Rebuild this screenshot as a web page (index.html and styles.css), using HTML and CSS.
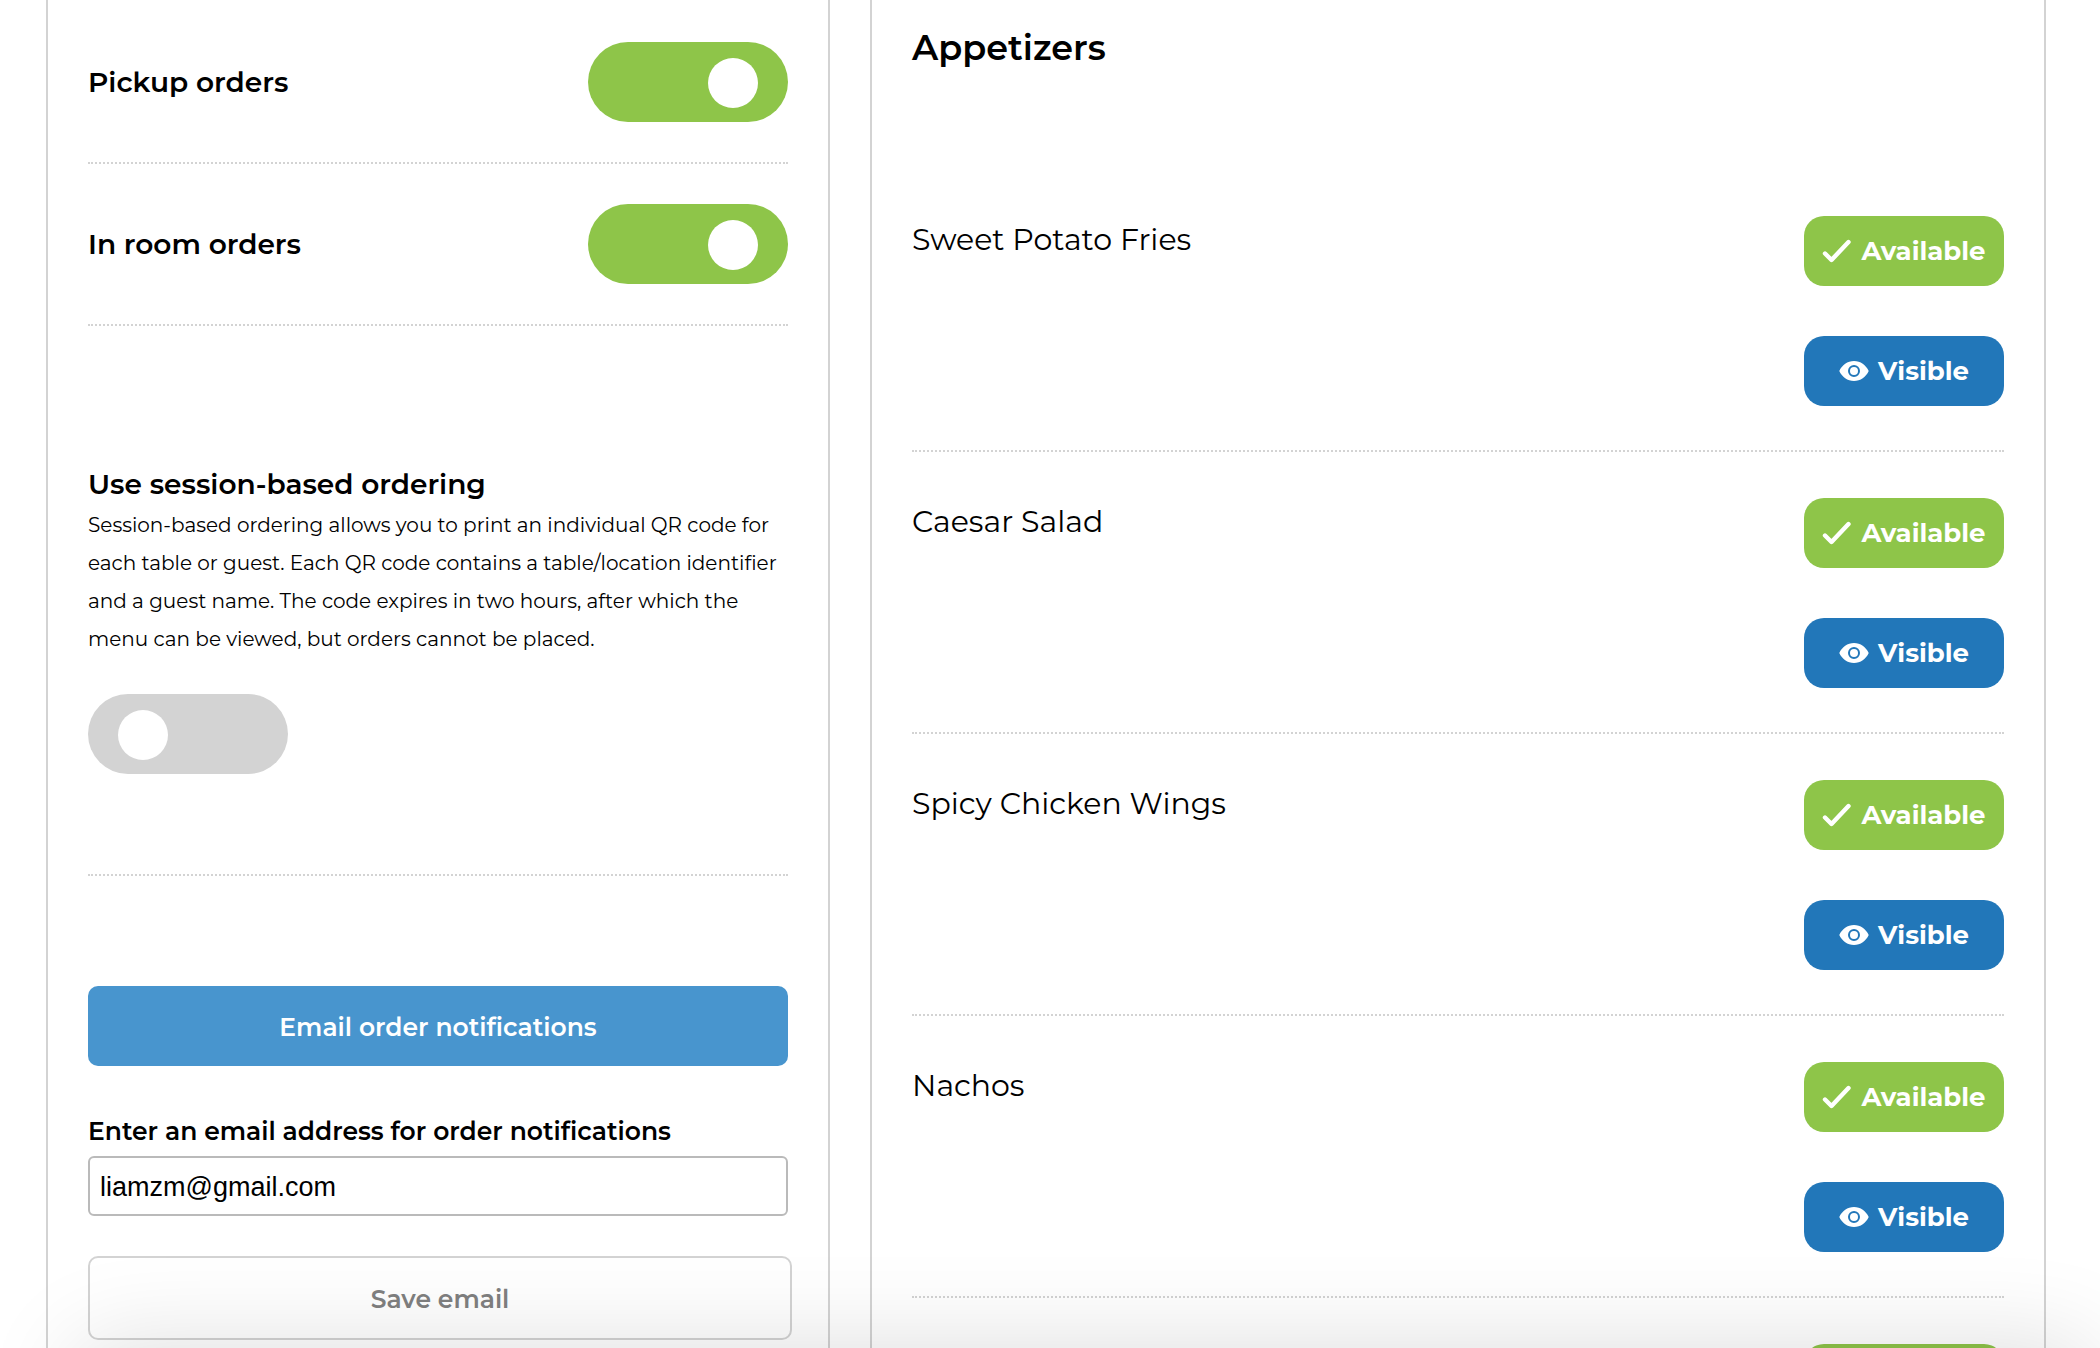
FILE: index.html
```html
<!DOCTYPE html>
<html lang="en">
<head>
<meta charset="utf-8">
<meta name="viewport" content="width=device-width, initial-scale=1">
<title>Menu settings</title>
<link rel="stylesheet" href="styles.css">
</head>
<body>
<svg class="sprite" aria-hidden="true">
  <symbol id="check" viewBox="0 0 30 26"><path d="M3 15.500 L9.500 22 L26.500 4" fill="none" stroke="currentColor" stroke-width="4.400" stroke-linecap="round" stroke-linejoin="round"/></symbol>
  <symbol id="eye" viewBox="0 0 30 26"><path fill="currentColor" fill-rule="evenodd" d="M15 3C8.500 3 3 7 0.300 13c2.700 6 8.200 10 14.700 10s12-4 14.700-10C27 7 21.500 3 15 3zM15 19a6 6 0 1 1 0-12a6 6 0 0 1 0 12z"/><circle cx="15" cy="13" r="4" fill="currentColor"/></symbol>
</svg>
<main class="page">
  <section class="card settings">
    <div class="setting">
      <label class="setting-name" for="pickup">Pickup orders</label>
      <input class="toggle" id="pickup" type="checkbox" checked>
    </div>
    <div class="setting">
      <label class="setting-name" for="room">In room orders</label>
      <input class="toggle" id="room" type="checkbox" checked>
    </div>
    <div class="session">
      <label class="setting-name" for="session">Use session-based ordering</label>
      <p class="note">Session-based ordering allows you to print an individual QR code for each table or guest. Each QR code contains a table/location identifier and a guest name. The code expires in two hours, after which the menu can be viewed, but orders cannot be placed.</p>
      <input class="toggle" id="session" type="checkbox">
    </div>
    <form class="email">
      <button class="notify" type="button">Email order notifications</button>
      <label class="email-label" for="email">Enter an email address for order notifications</label>
      <input class="email-input" id="email" type="email" value="liamzm@gmail.com">
      <button class="save" type="button">Save email</button>
    </form>
  </section>
  <section class="card menu">
    <h2 class="menu-title">Appetizers</h2>
    <ul class="items">
      <li class="item"><span class="item-name">Sweet Potato Fries</span>
        <div class="actions"><button class="pill available" type="button"><svg class="icon"><use href="#check"/></svg>Available</button><button class="pill visible" type="button"><svg class="icon"><use href="#eye"/></svg>Visible</button></div></li>
      <li class="item"><span class="item-name">Caesar Salad</span>
        <div class="actions"><button class="pill available" type="button"><svg class="icon"><use href="#check"/></svg>Available</button><button class="pill visible" type="button"><svg class="icon"><use href="#eye"/></svg>Visible</button></div></li>
      <li class="item"><span class="item-name">Spicy Chicken Wings</span>
        <div class="actions"><button class="pill available" type="button"><svg class="icon"><use href="#check"/></svg>Available</button><button class="pill visible" type="button"><svg class="icon"><use href="#eye"/></svg>Visible</button></div></li>
      <li class="item"><span class="item-name">Nachos</span>
        <div class="actions"><button class="pill available" type="button"><svg class="icon"><use href="#check"/></svg>Available</button><button class="pill visible" type="button"><svg class="icon"><use href="#eye"/></svg>Visible</button></div></li>
      <li class="item"><span class="item-name"></span>
        <div class="actions"><button class="pill available" type="button" aria-label="Available"></button></div></li>
    </ul>
  </section>
</main>
<div class="bottom-shade"></div>
</body>
</html>
```
FILE: styles.css
```css
* { box-sizing: border-box; }
body {
  margin: 0;
  height: 100vh;
  overflow: hidden;
  background: #fff;
  color: #000;
  font-family: Montserrat, Inter, "Open Sans", sans-serif;
  font-variant-ligatures: no-common-ligatures;
}
.sprite { display: none; }
.page {
  display: grid;
  grid-template-columns: minmax(0, 2fr) minmax(0, 3fr);
  gap: 40px;
  height: 100vh;
  padding: 0 54px 0 46px;
  overflow: hidden;
}
.card {
  padding: 0 40px;
  border: solid #d3d3d3;
  border-width: 0 2px;
}
.setting {
  display: flex;
  align-items: center;
  justify-content: space-between;
  padding: 40px 0;
  border-bottom: 2px dotted #d3d3d3;
}
.setting:first-child { padding-top: 42px; }
.setting-name {
  font-size: 28px;
  font-weight: 600;
  line-height: 38px;
}
.toggle {
  appearance: none;
  display: block;
  width: 200px;
  height: 80px;
  margin: 0;
  padding: 16px 30px;
  border-radius: 40px;
  background: #d3d3d3;
}
.toggle::before {
  content: "";
  display: block;
  width: 50px;
  height: 50px;
  border-radius: 50%;
  background: #fff;
}
.toggle:checked { background: #8ec549; }
.toggle:checked::before { margin-left: 90px; }
.session {
  padding: 139px 0 100px;
  border-bottom: 2px dotted #d3d3d3;
}
.note {
  margin: 3px 0 36px;
  font-size: 20px;
  line-height: 38px;
}
.email {
  display: flex;
  flex-direction: column;
  padding-top: 110px;
}
.notify, .save {
  padding: 2px 0 0;
  font: 600 25px/38px Montserrat, Inter, "Open Sans", sans-serif;
  font-variant-ligatures: no-common-ligatures;
}
.notify {
  height: 80px;
  border: 0;
  border-radius: 10px;
  background: #4895ce;
  color: #fff;
}
.email-label {
  margin: 46px 0 6px;
  font-size: 25px;
  font-weight: 600;
  line-height: 38px;
}
.email-input {
  height: 60px;
  padding: 2px 10px 0;
  border: 2px solid #bababa;
  border-radius: 6px;
  font: 27px "Liberation Sans", Arial, sans-serif;
}
.save {
  height: 84px;
  margin: 40px -4px 0 0;
  border: 2px solid #d3d3d3;
  border-radius: 10px;
  background: transparent;
  color: #808080;
}
.menu-title {
  margin: 24px 0 0;
  font-size: 35px;
  font-weight: 600;
  line-height: 48px;
}
.items {
  margin: 98px 0 0;
  padding: 0;
  list-style: none;
}
.item {
  display: flex;
  justify-content: space-between;
  padding: 46px 0 44px;
  border-bottom: 2px dotted #d3d3d3;
}
.item-name {
  font-size: 30px;
  line-height: 48px;
}
.actions {
  display: grid;
  gap: 50px;
}
.pill {
  display: flex;
  align-items: center;
  justify-content: center;
  gap: 9px;
  width: 200px;
  height: 70px;
  padding: 0;
  border: 0;
  border-radius: 20px;
  color: #fff;
  font: 700 26px/38px Montserrat, Inter, "Open Sans", sans-serif;
}
.available { background: #8ec549; }
.visible { background: #2277b9; }
.icon {
  width: 30px;
  height: 26px;
}
.bottom-shade {
  position: fixed;
  top: 100vh;
  left: 80px;
  right: 10px;
  height: 200px;
  box-shadow: 0 0 100px rgba(0, 0, 0, 0.14);
  pointer-events: none;
}
```
